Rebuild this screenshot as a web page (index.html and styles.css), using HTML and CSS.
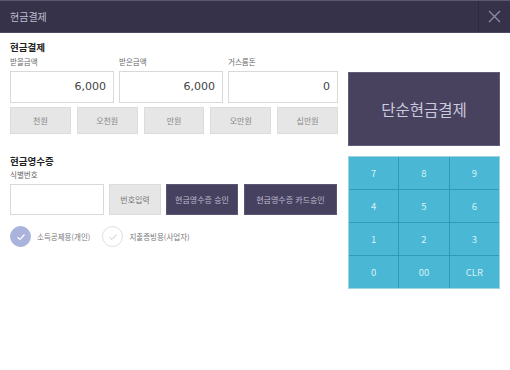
FILE: index.html
```html
<!DOCTYPE html>
<html lang="ko">
<head>
  <meta charset="UTF-8" />
  <title>현금결제</title>
  <link rel="stylesheet" href="styles.css">
</head>
<body>
  <div class="header">
    <span class="header-title">현금결제</span>
    <button class="close" type="button" aria-label="닫기">
      <svg width="13" height="13" viewBox="0 0 13 13"><path d="M1 1L12 12M12 1L1 12" stroke="#8d8ba6" stroke-width="1.3" fill="none"/></svg>
    </button>
  </div>

  <div class="main">
    <div class="left">
      <h2 class="sec-title">현금결제</h2>
      <div class="fields">
        <div class="field f1">
          <label>받을금액</label>
          <div class="amount">6,000</div>
        </div>
        <div class="field f2">
          <label>받은금액</label>
          <div class="amount">6,000</div>
        </div>
        <div class="field f3">
          <label>거스름돈</label>
          <div class="amount">0</div>
        </div>
      </div>
      <div class="quick">
        <button type="button">천원</button>
        <button type="button">오천원</button>
        <button type="button">만원</button>
        <button type="button">오만원</button>
        <button type="button">십만원</button>
      </div>

      <h2 class="sec-title second">현금영수증</h2>
      <label class="id-label">식별번호</label>
      <div class="receipt">
        <div class="id-input"></div>
        <button type="button" class="btn-light">번호입력</button>
        <button type="button" class="btn-dark w1">현금영수증 승인</button>
        <button type="button" class="btn-dark w2">현금영수증 카드승인</button>
      </div>

      <div class="checks">
        <div class="check on">
          <span class="circle"><svg width="10" height="8" viewBox="0 0 10 8"><path d="M1.5 4.2L4 6.5L8.5 1.5" stroke="#fff" stroke-width="1.2" fill="none"/></svg></span>
          소득공제용(개인)
        </div>
        <div class="check">
          <span class="circle"><svg width="10" height="8" viewBox="0 0 10 8"><path d="M1.5 4.2L4 6.5L8.5 1.5" stroke="#c9c9c9" stroke-width="1" fill="none"/></svg></span>
          지출증빙용(사업자)
        </div>
      </div>
    </div>

    <div class="right">
      <button type="button" class="pay">단순현금결제</button>
      <div class="keypad">
        <button type="button">7</button>
        <button type="button">8</button>
        <button type="button">9</button>
        <button type="button">4</button>
        <button type="button">5</button>
        <button type="button">6</button>
        <button type="button">1</button>
        <button type="button">2</button>
        <button type="button">3</button>
        <button type="button">0</button>
        <button type="button">00</button>
        <button type="button">CLR</button>
      </div>
    </div>
  </div>
</body>
</html>
```

FILE: styles.css
```css
body {
  margin: 0;
  background: #fff;
  font-family: "Noto Sans CJK KR", "Noto Sans", sans-serif;
  color: #333;
}
button {
  font-family: inherit;
  padding: 0;
  cursor: pointer;
}
.header {
  display: flex;
  align-items: center;
  height: 31px;
  background: #353249;
  border-top: 1px solid #5b5970;
  border-bottom: 1px solid #4c4963;
}
.header-title {
  flex: 1;
  padding-left: 10px;
  font-size: 10px;
  color: #bebdcf;
}
.close {
  width: 32px;
  height: 31px;
  background: none;
  border: none;
  border-left: 1px solid #2c2a3e;
  display: flex;
  align-items: center;
  justify-content: center;
}
.main {
  display: flex;
  padding-left: 10px;
}
.left {
  width: 328px;
}
.sec-title {
  margin: 0;
  padding-top: 8px;
  font-size: 9.5px;
  line-height: 12px;
  font-weight: bold;
  color: #222;
}
.sec-title.second {
  padding-top: 0;
  margin-top: 21px;
}
.fields {
  display: flex;
  gap: 5px;
  margin-top: 4px;
}
.field label, .id-label {
  display: block;
  font-size: 7.5px;
  line-height: 10px;
  color: #666;
}
.f1, .f2 { width: 104px; }
.f3 { width: 110px; }
.amount {
  margin-top: 4px;
  height: 30px;
  border: 1px solid #d9d9d9;
  text-align: right;
  padding-right: 7px;
  font-size: 11px;
  line-height: 30px;
  color: #444;
  font-family: "DejaVu Sans", sans-serif;
}
.quick {
  display: grid;
  grid-template-columns: repeat(5, 1fr);
  gap: 6px;
  margin-top: 4px;
}
.quick button {
  height: 27px;
  background: #e6e6e6;
  border: 1px solid #dcdcdc;
  font-size: 8px;
  color: #888;
}
.id-label {
  margin-top: 3px;
}
.receipt {
  display: flex;
  gap: 5px;
  margin-top: 4px;
  height: 31px;
}
.id-input {
  width: 92px;
  border: 1px solid #d9d9d9;
}
.btn-light {
  width: 52px;
  background: #e6e6e6;
  border: 1px solid #dcdcdc;
  font-size: 8px;
  color: #777;
}
.btn-dark {
  background: #46415e;
  border: 1px solid #5a5674;
  font-size: 8px;
  color: #bcbbd0;
}
.w1 { width: 72px; }
.w2 { width: 93px; margin-left: 1px; }
.checks {
  display: flex;
  gap: 12px;
  margin-top: 11px;
}
.check {
  display: flex;
  align-items: center;
  gap: 6px;
  font-size: 7.5px;
  color: #777;
}
.circle {
  width: 21px;
  height: 21px;
  border-radius: 50%;
  border: 1px solid #dedede;
  box-sizing: border-box;
  display: flex;
  align-items: center;
  justify-content: center;
}
.check.on .circle {
  background: #aab3db;
  border-color: #aab3db;
}
.right {
  width: 152px;
  margin-left: 10px;
  padding-top: 39px;
}
.pay {
  display: block;
  width: 152px;
  height: 74px;
  background: #48425f;
  border: 1px solid #625e7a;
  font-size: 15.5px;
  color: #c9cade;
}
.keypad {
  margin-top: 10px;
  display: grid;
  grid-template-columns: repeat(3, 1fr);
  grid-template-rows: repeat(4, 1fr);
  height: 131px;
  background: #2f9bb6;
  gap: 1px;
  border: 1px solid #9ed4e2;
}
.keypad button {
  background: #4ab8d4;
  border: none;
  font-size: 9.5px;
  color: #d8f1f7;
}
```
